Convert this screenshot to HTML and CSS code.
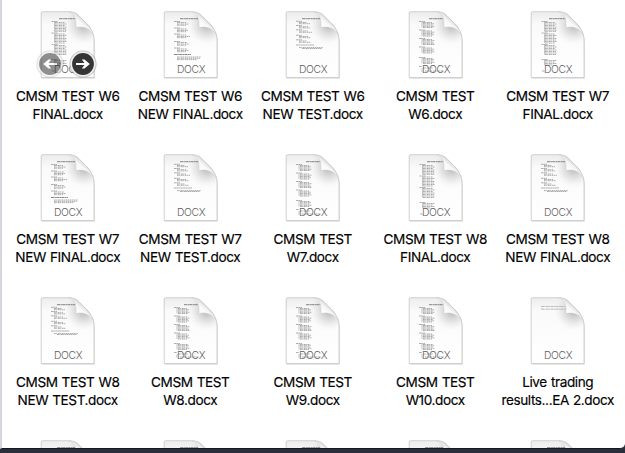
FILE: index.html
```
<!DOCTYPE html>
<html lang="en">
<head>
<meta charset="utf-8">
<title>Documents</title>
<link rel="stylesheet" href="styles.css">
</head>
<body>
<svg class="defs" width="0" height="0">
	<defs>
		<linearGradient id="paper" x1="0" y1="0" x2="0" y2="1">
			<stop offset="0" stop-color="#ececec"/>
			<stop offset="0.2" stop-color="#fafafa"/>
			<stop offset="1" stop-color="#ffffff"/>
		</linearGradient>
		<radialGradient id="shade" gradientUnits="userSpaceOnUse" cx="44" cy="14" r="21">
			<stop offset="0" stop-color="#888" stop-opacity="0.6"/>
			<stop offset="0.4" stop-color="#999" stop-opacity="0.32"/>
			<stop offset="0.7" stop-color="#aaa" stop-opacity="0.12"/>
			<stop offset="1" stop-color="#fff" stop-opacity="0"/>
		</radialGradient>
		<linearGradient id="curl" gradientUnits="userSpaceOnUse" x1="36" y1="16" x2="43" y2="8">
			<stop offset="0" stop-color="#fff"/>
			<stop offset="0.6" stop-color="#f8f8f8"/>
			<stop offset="1" stop-color="#dadada"/>
		</linearGradient>
		<symbol id="sheet" viewBox="0 0 58 70">
			<path class="shadow" d="M1.500 2h27C37 2 39 6 44.500 11 51 16 54.800 23 54.800 30v37.800H1.500z"/>
			<path class="sheet" d="M2.500 .7h26C37 .7 39 5 44 10 50 15 54 22 54 29v37.500H1.200V2Q1.200 .7 2.500 .7z"/>
			<path fill="url(#shade)" d="M20 1h8.500C37 1 39 5 44 10 50 15 53.600 22 53.600 29v9H20z"/>
		</symbol>
		<symbol id="fold" viewBox="0 0 58 70">
			<path class="fold" d="M28.500 .7C35 2.500 36.500 8 36 16.500 43 15 49 17 53 23 51 18 48 13.500 44 10 39 5 36 1.300 28.500 .7z"/>
		</symbol>
		<!-- page contents -->
		<symbol id="long" viewBox="0 0 58 70">
			<path class="title" d="M19 7.700h17"/>
			<path class="head" d="M11.500 10.500h6M11.500 22h6M11.500 33.500h6M11.500 48.500h6M12 60h3"/>
			<path class="bars" d="M14.500 11v9.500M14.500 22.500v9.500M14.500 34v9.500M14.500 49v5"/>
			<path class="rows" d="M15 11.500h10M15 13h12M15 14.500h10M15 16h12M15 17.500h11M15 19h12M15 20.300h11M15 23h10M15 24.500h12M15 26h10M15 27.500h12M15 29h11M15 30.500h12M15 32h10M15 34.500h10M15 36h12M15 37.500h10M15 39h12M15 40.500h11M15 42h12M15 43.500h11M15 49.500h12M15 51h10M15 52.500h12M15 54h8"/>
		</symbol>
		<symbol id="medium" viewBox="0 0 58 70">
			<path class="title" d="M21 7.700h15"/>
			<path class="head" d="M11 10.500h6M11 19h6M11 27.500h6M11 36h6M11 46.500h6M11 55.500h3"/>
			<path class="bars" d="M14 11v5.500M14 19.500v5.500M14 28v5.500M14 36.500v5.500M14 47v5.500M14 57v4"/>
			<path class="rows" d="M15 11.500h9M15 12.700h11M15 14h10M15 15.300h12M15 16.500h10M15 20h9M15 21.200h12M15 22.500h10M15 23.800h11M15 25h9M15 28.500h9M15 29.700h12M15 31h10M15 32.300h11M15 33.500h12M15 37h9M15 38.200h11M15 39.500h10M15 40.800h12M15 42h9M15 47.500h10M15 48.700h11M15 50h10M15 51.300h12M15 52.500h9M15 57h10M17 60h18"/>
		</symbol>
		<symbol id="short" viewBox="0 0 58 70">
			<path class="title" d="M17 7.700h19"/>
			<path class="head" d="M11 10.500h6M11 17h6M11 23h6M11 30.500h6M11 37h6"/>
			<path class="title" d="M11 43.500h17"/>
			<path class="rows" d="M14 11.500h9M14 13h12M14 14.200h9M14 18h10M14 19.500h11M14 20.700h9M14 24h9M14 25.500h13M14 26.700h9M14 31.500h10M14 33h12M14 34.200h9M14 38h10M14 39.500h12M14 40.700h9M14 46h24M14 47.300h23M14 48.600h20"/>
		</symbol>
		<symbol id="brief" viewBox="0 0 58 70">
			<path class="title" d="M17 7.700h19"/>
			<path class="head" d="M11 10.300h6M11 14.500h6M11 18.800h6M11 24.300h6M11 28.800h6M11 34h18"/>
			<path class="rows" d="M14 11.500h8M14 12.700h11M14 15.700h9M14 16.900h11M14 20h9M14 21.300h13M14 25.500h9M14 26.700h12M14 30h8M14 31.300h12"/>
			<path class="rows" d="M14 36.600h24M17 37.500h20"/>
		</symbol>
		<symbol id="letter" viewBox="0 0 58 70">
			<path class="faint" d="M11 9.500h26M11 12.200h26"/>
		</symbol>
		<symbol id="arrow" viewBox="0 0 28 28">
			<circle cx="14" cy="14" r="13.600" fill="#888" opacity="0.5"/>
			<circle cx="14" cy="14" r="12.700" fill="#ededed"/>
			<circle cx="14" cy="14" r="10.900" fill="#353535"/>
			<path d="M7 12.900h8.500L12.800 9.500h2.700L20.800 14l-5.300 4.500h-2.700l2.700-3.400H7z" fill="#fff"/>
		</symbol>
	</defs>
</svg>

<div class="window">
	<ul class="files">
		<li class="file">
			<div class="icon">
				<svg class="doc"><use href="#sheet"/><use href="#long"/><use href="#fold"/><text x="14" y="62.300">DOCX</text></svg>
				<div class="pager">
					<svg class="prev"><use href="#arrow"/></svg>
					<svg class="next"><use href="#arrow"/></svg>
				</div>
			</div>
			<p><span>CMSM TEST W6</span><span>FINAL.docx</span></p>
		</li>
		<li class="file">
			<svg class="doc"><use href="#sheet"/><use href="#short"/><use href="#fold"/><text x="14" y="62.300">DOCX</text></svg>
			<p><span>CMSM TEST W6</span><span>NEW FINAL.docx</span></p>
		</li>
		<li class="file">
			<svg class="doc"><use href="#sheet"/><use href="#brief"/><use href="#fold"/><text x="14" y="62.300">DOCX</text></svg>
			<p><span>CMSM TEST W6</span><span>NEW TEST.docx</span></p>
		</li>
		<li class="file">
			<svg class="doc"><use href="#sheet"/><use href="#medium"/><use href="#fold"/><text x="14" y="62.300">DOCX</text></svg>
			<p><span>CMSM TEST</span><span>W6.docx</span></p>
		</li>
		<li class="file">
			<svg class="doc"><use href="#sheet"/><use href="#long"/><use href="#fold"/><text x="14" y="62.300">DOCX</text></svg>
			<p><span>CMSM TEST W7</span><span>FINAL.docx</span></p>
		</li>

		<li class="file">
			<svg class="doc"><use href="#sheet"/><use href="#short"/><use href="#fold"/><text x="14" y="62.300">DOCX</text></svg>
			<p><span>CMSM TEST W7</span><span>NEW FINAL.docx</span></p>
		</li>
		<li class="file">
			<svg class="doc"><use href="#sheet"/><use href="#brief"/><use href="#fold"/><text x="14" y="62.300">DOCX</text></svg>
			<p><span>CMSM TEST W7</span><span>NEW TEST.docx</span></p>
		</li>
		<li class="file">
			<svg class="doc"><use href="#sheet"/><use href="#medium"/><use href="#fold"/><text x="14" y="62.300">DOCX</text></svg>
			<p><span>CMSM TEST</span><span>W7.docx</span></p>
		</li>
		<li class="file">
			<svg class="doc"><use href="#sheet"/><use href="#long"/><use href="#fold"/><text x="14" y="62.300">DOCX</text></svg>
			<p><span>CMSM TEST W8</span><span>FINAL.docx</span></p>
		</li>
		<li class="file">
			<svg class="doc"><use href="#sheet"/><use href="#brief"/><use href="#fold"/><text x="14" y="62.300">DOCX</text></svg>
			<p><span>CMSM TEST W8</span><span>NEW FINAL.docx</span></p>
		</li>

		<li class="file">
			<svg class="doc"><use href="#sheet"/><use href="#brief"/><use href="#fold"/><text x="14" y="62.300">DOCX</text></svg>
			<p><span>CMSM TEST W8</span><span>NEW TEST.docx</span></p>
		</li>
		<li class="file">
			<svg class="doc"><use href="#sheet"/><use href="#medium"/><use href="#fold"/><text x="14" y="62.300">DOCX</text></svg>
			<p><span>CMSM TEST</span><span>W8.docx</span></p>
		</li>
		<li class="file">
			<svg class="doc"><use href="#sheet"/><use href="#medium"/><use href="#fold"/><text x="14" y="62.300">DOCX</text></svg>
			<p><span>CMSM TEST</span><span>W9.docx</span></p>
		</li>
		<li class="file">
			<svg class="doc"><use href="#sheet"/><use href="#medium"/><use href="#fold"/><text x="14" y="62.300">DOCX</text></svg>
			<p><span>CMSM TEST</span><span>W10.docx</span></p>
		</li>
		<li class="file">
			<svg class="doc"><use href="#sheet"/><use href="#letter"/><use href="#fold"/><text x="14" y="62.300">DOCX</text></svg>
			<p><span>Live trading</span><span>results...EA 2.docx</span></p>
		</li>

		<li class="file"><svg class="doc"><use href="#sheet"/><use href="#brief"/><use href="#fold"/></svg></li>
		<li class="file"><svg class="doc"><use href="#sheet"/><use href="#brief"/><use href="#fold"/></svg></li>
		<li class="file"><svg class="doc"><use href="#sheet"/><use href="#brief"/><use href="#fold"/></svg></li>
		<li class="file"><svg class="doc"><use href="#sheet"/><use href="#brief"/><use href="#fold"/></svg></li>
		<li class="file"><svg class="doc"><use href="#sheet"/><use href="#brief"/><use href="#fold"/></svg></li>
	</ul>
</div>
</body>
</html>
```
FILE: styles.css
```
*{padding:0; margin:0; list-style:none; box-sizing:border-box;}
body{height:453px; overflow:hidden; background:#2a2e3b; font-family:Inter, "Liberation Sans", sans-serif;}
.defs{display:block;}
.window{height:449px; overflow:hidden; background:#fff; border-left:2px solid #d3d6de; border-bottom:1px solid #15171e; border-bottom-right-radius:5px;}
.files{display:grid; grid-template-columns:repeat(5, 122.5px); grid-auto-rows:143px; padding:11px 0 0 4.5px;}

.file{display:flex; flex-direction:column; align-items:center;}
.file p{margin-top:6px; color:#000; font-size:13.6px; line-height:18px; text-align:center; white-space:nowrap; letter-spacing:-0.4px; word-spacing:0.6px; -webkit-text-stroke:0.15px #000;}
.file span{display:block;}
.icon{position:relative; height:70px;}
.doc{display:block; width:58px; height:70px; margin-left:2.6px;}
.doc text{font-size:10.300px; font-weight:300; fill:#606060; letter-spacing:-0.3px;}

.sheet{fill:url(#paper); stroke:#c6c6c6; stroke-width:0.8;}
.shadow{fill:#000; opacity:0.13;}
.fold{fill:url(#curl); stroke:#c8c8c8; stroke-width:0.4;}
.title{fill:none; stroke:#666; stroke-width:0.8; stroke-dasharray:3 0.4 1.500 0.3;}
.head{fill:none; stroke:#999; stroke-width:0.8; stroke-dasharray:2 0.3;}
.bars{fill:none; stroke:#aaa; stroke-width:0.7;}
.rows{fill:none; stroke:#949494; stroke-width:0.8; stroke-dasharray:1.800 0.5 1 0.6;}
.faint{fill:none; stroke:#b5b5b5; stroke-width:0.9; stroke-dasharray:3 0.4 1 0.4;}

/* page arrows over the hovered icon */
.pager{position:absolute; left:-1px; top:39px; display:flex; gap:5px;}
.pager svg{width:28px; height:28px;}
.prev{transform:scaleX(-1); opacity:0.55;}
```
